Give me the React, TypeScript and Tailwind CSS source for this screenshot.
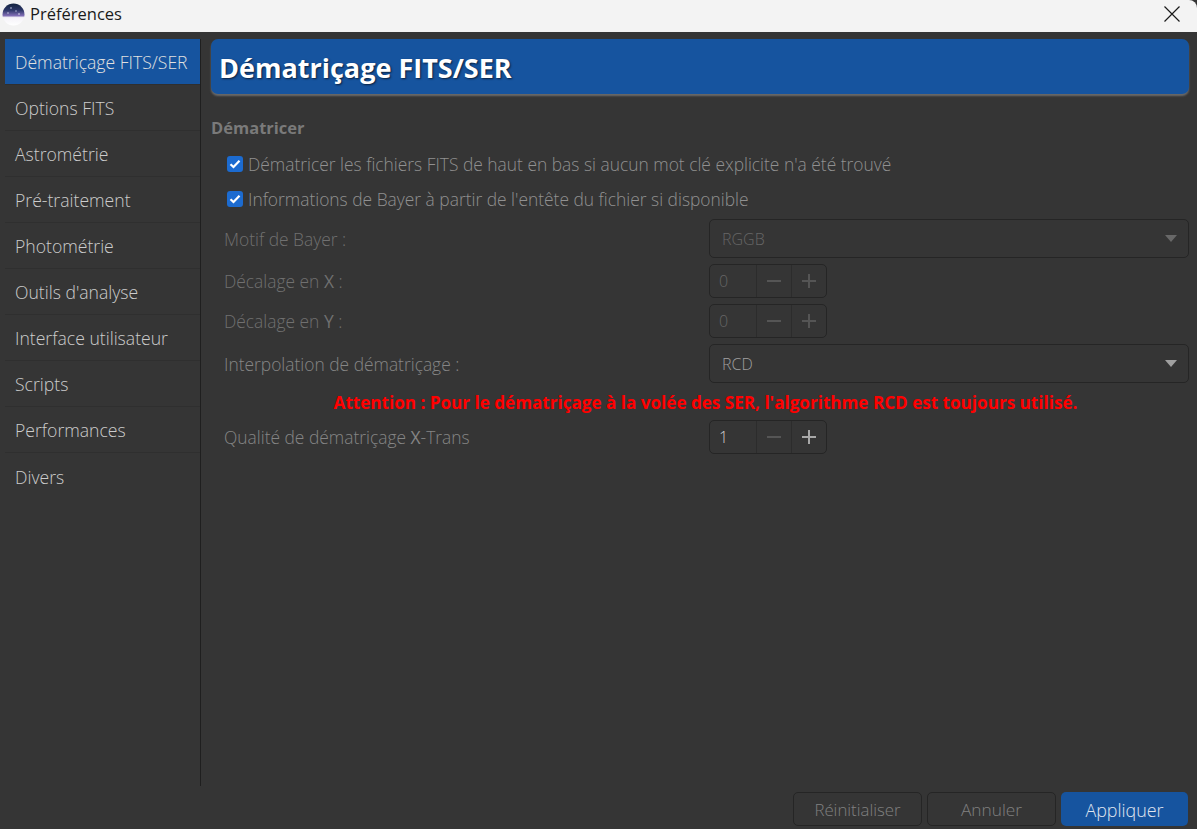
import React from "react";

const menuItems = [
  "Dématriçage FITS/SER",
  "Options FITS",
  "Astrométrie",
  "Pré-traitement",
  "Photométrie",
  "Outils d'analyse",
  "Interface utilisateur",
  "Scripts",
  "Performances",
  "Divers",
];

const AppIcon = () => (
  <svg width="23" height="23" viewBox="0 0 23 23" className="shrink-0">
    <defs>
      <linearGradient id="sky" x1="0" y1="0" x2="0" y2="1">
        <stop offset="0" stopColor="#12233f" />
        <stop offset="0.3" stopColor="#2b3566" />
        <stop offset="0.55" stopColor="#7f6db4" />
        <stop offset="0.64" stopColor="#f4f2f8" />
        <stop offset="1" stopColor="#ffffff" />
      </linearGradient>
    </defs>
    <circle cx="11.5" cy="11.5" r="11" fill="url(#sky)" />
    <circle cx="9" cy="5" r="0.8" fill="#c8d0e8" />
    <circle cx="14" cy="8" r="0.7" fill="#c8d0e8" />
    <circle cx="6" cy="10" r="0.7" fill="#e4e4f4" />
    <circle cx="17" cy="11" r="0.8" fill="#e4e4f4" />
  </svg>
);

const CheckRow = ({ label }: { label: string }) => (
  <div className="flex h-[35px] items-center pl-[16px]">
    <span className="mr-[5px] flex h-4 w-4 items-center justify-center rounded-[3px] bg-[#1c6bd0]">
      <svg width="12" height="10" viewBox="0 0 12 10" fill="none">
        <path d="M1.5 5.2 4.5 8 10.5 1.8" stroke="#fff" strokeWidth="2.2" />
      </svg>
    </span>
    <span className="pt-px text-[17.4px] font-light text-[#909090]">{label}</span>
  </div>
);

const Row = ({
  label,
  bold,
  after,
  muted,
  className,
  children,
}: {
  label: string;
  bold?: string;
  after?: string;
  muted?: boolean;
  className: string;
  children: React.ReactNode;
}) => (
  <div className={`flex items-center ${className}`}>
    <span
      className={`w-[498px] shrink-0 pt-px pl-[13px] text-[17.4px] font-light ${
        muted ? "text-[#707070]" : "text-[#858585]"
      }`}
    >
      {label}
      {bold && <b className="font-medium">{bold}</b>}
      {after}
    </span>
    {children}
  </div>
);

const Select = ({ value, disabled }: { value: string; disabled?: boolean }) => (
  <div className="flex h-full w-[480px] items-center justify-between rounded-[5px] border border-[#252525] pl-[12px] pr-[11px]">
    <span className={`pt-px font-light ${disabled ? "text-[#666]" : "text-[#a0a0a0]"}`}>{value}</span>
    <span
      className={`h-0 w-0 border-x-[6px] border-t-[7px] border-x-transparent ${
        disabled ? "border-t-[#686868]" : "border-t-[#a0a0a0]"
      }`}
    />
  </div>
);

const Spin = ({ value, disabled }: { value: string; disabled?: boolean }) => (
  <div className="flex h-full w-[118px] items-stretch rounded-[5px] border border-[#252525]">
    <span className={`flex w-[46px] items-center pl-[9px] font-light ${disabled ? "text-[#666]" : "text-[#d0d0d0]"}`}>
      {value}
    </span>
    <span className="flex w-[35px] items-center justify-center border-l border-[#2c2c2c]">
      <svg width="16" height="16" viewBox="0 0 16 16" stroke="#555" strokeWidth="2">
        <path d="M1 8h14" />
      </svg>
    </span>
    <span className="flex flex-1 items-center justify-center border-l border-[#2c2c2c]">
      <svg width="16" height="16" viewBox="0 0 16 16" stroke={disabled ? "#555" : "#a8a8a8"} strokeWidth="2">
        <path d="M1 8h14M8 1v14" />
      </svg>
    </span>
  </div>
);

export default function App() {
  return (
    <div className="flex h-[829px] w-[1197px] flex-col overflow-hidden bg-[#353535] font-['Open_Sans',sans-serif] text-[16px]">
      <div className="flex h-8 shrink-0 items-center justify-between rounded-tr-lg bg-[#f3f3f3] pb-[4px] pl-[2px] pr-[17px]">
        <div className="flex items-center gap-[5px] text-[16.5px] text-[#1a1a1a]">
          <AppIcon />
          <span>Préférences</span>
        </div>
        <svg width="16" height="16" viewBox="0 0 16 16" stroke="#1a1a1a" strokeWidth="1.2">
          <path d="M.5.5l15 15M15.5.5l-15 15" />
        </svg>
      </div>

      <div className="flex h-[754px] shrink-0 pt-[7px]">
        <nav className="w-[201px] shrink-0 border-r border-[#1f1f1f] pl-[5px] text-[17.6px] font-light">
          {menuItems.map((item, index) => (
            <div
              key={item}
              className={`flex h-[46px] items-center pt-[2px] pl-[10px] whitespace-nowrap ${
                index === 0 ? "bg-[#16549f] text-[#e0e0e0]" : "text-[#cccccc]"
              } ${index < menuItems.length - 1 ? "border-b border-[#2f2f2f]" : ""}`}
            >
              {item}
            </div>
          ))}
        </nav>

        <main className="flex-1 pl-[10px] pr-2">
          <div className="flex h-[55px] items-center rounded-[7px] bg-[#16549f] pl-2 pt-[3px] text-[27px] font-bold text-white shadow-[0_2px_2px_#6a6a6a] [text-shadow:1px_1px_2px_#0a1f3c]">
            Dématriçage FITS/SER
          </div>
          <h2 className="mt-[23px] mb-[7px] text-[16.5px] font-bold leading-[22px] text-[#7a7a7a]">Dématricer</h2>
          <CheckRow label="Dématricer les fichiers FITS de haut en bas si aucun mot clé explicite n'a été trouvé" />
          <CheckRow label="Informations de Bayer à partir de l'entête du fichier si disponible" />
          <Row label="Motif de Bayer :" muted className="mt-[3px] h-[39px]">
            <Select value="RGGB" disabled />
          </Row>
          <Row label="Décalage en " bold="X" after=" :" muted className="mt-[6px] h-[34px]">
            <Spin value="0" disabled />
          </Row>
          <Row label="Décalage en " bold="Y" after=" :" muted className="mt-[6px] h-[34px]">
            <Spin value="0" disabled />
          </Row>
          <Row label="Interpolation de dématriçage :" className="mt-[6px] h-[39px]">
            <Select value="RCD" />
          </Row>
          <p className="mt-[9px] flex h-[20px] items-center justify-center pt-px pl-[11px] text-[17.1px] font-bold leading-5 text-[#ff0000]">
            Attention : Pour le dématriçage à la volée des SER, l'algorithme RCD est toujours utilisé.
          </p>
          <Row label="Qualité de dématriçage " bold="X" after="-Trans" className="mt-[8px] h-[34px]">
            <Spin value="1" />
          </Row>
        </main>
      </div>

      <div className="flex justify-end gap-[5px] pt-[6px] pr-[9px]">
        <button className="h-[34px] w-[129px] rounded-[5px] border border-[#252525] pt-[2px] text-[16.8px] font-light text-[#808080]">
          Réinitialiser
        </button>
        <button className="h-[34px] w-[129px] rounded-[5px] border border-[#252525] pt-[2px] text-[17.3px] font-light text-[#808080]">
          Annuler
        </button>
        <button className="h-[34px] w-[127px] rounded-[5px] bg-[#16549f] pt-[2px] text-[17.9px] font-light text-[#e0e6f0]">
          Appliquer
        </button>
      </div>
    </div>
  );
}
